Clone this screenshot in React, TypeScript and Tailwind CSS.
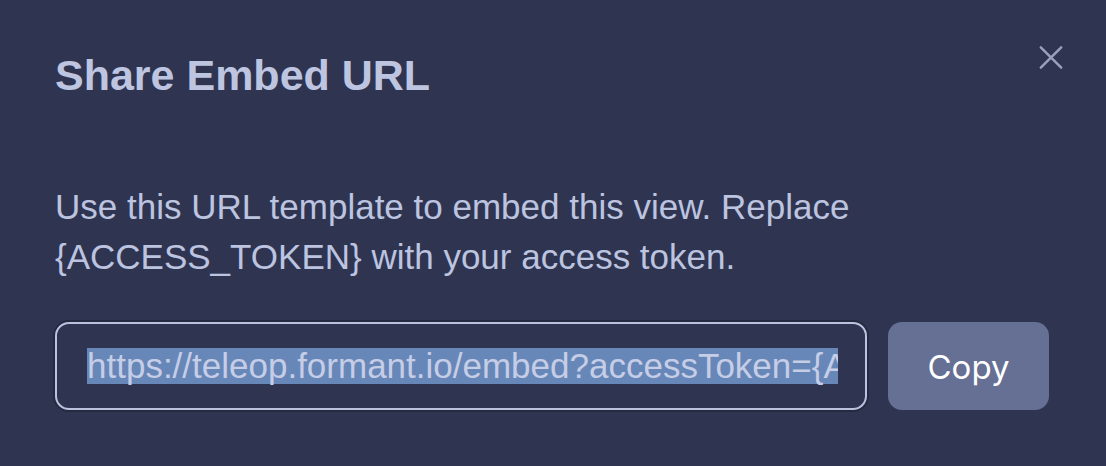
import React from "react";

export default function App() {
  return (
    <div
      className="w-[1106px] h-[466px] bg-[#2f3551] pl-[55px] pr-[57px] pt-[40px] overflow-hidden"
      style={{ fontFamily: '"Liberation Sans", Arial, sans-serif' }}
    >
      <div className="flex items-start justify-between">
        <h1 className="text-[43px] leading-[70px] font-bold text-[#bec5e1]">Share Embed URL</h1>
        <button className="mt-[4px] -mr-[15px] text-[#9aa1bd]" aria-label="Close">
          <svg width="26" height="27" viewBox="0 0 28 28" fill="none">
            <path d="M3 3L25 25M25 3L3 25" stroke="currentColor" strokeWidth="2.6" strokeLinecap="round" />
          </svg>
        </button>
      </div>
      <p className="mt-[72px] text-[35px] leading-[50px] text-[#bcc4e0]">
        Use this URL template to embed this view. Replace
        <br />
        {"{ACCESS_TOKEN}"} with your access token.
      </p>
      <div className="mt-[40px] flex gap-[21px]">
        <div className="flex-1 h-[88px] rounded-[14px] border-2 border-[#bac2de] shadow-[0_0_0_2px_#242a3f] flex items-center pl-[30px] pr-[27px] overflow-hidden">
          <div className="overflow-hidden whitespace-nowrap w-full">
            <span className="inline-block h-[36px] leading-[36px] bg-[#6787b8] text-[35px] text-[#c6cde6]">
              {"https://teleop.formant.io/embed?accessToken={ACCESS_TOKEN}"}
            </span>
          </div>
        </div>
        <button
          className="w-[161px] h-[88px] rounded-[14px] bg-[#666f94] text-white text-[33px] pt-[4px]"
          style={{ fontFamily: 'Inter, Roboto, sans-serif' }}
        >
          Copy
        </button>
      </div>
    </div>
  );
}
